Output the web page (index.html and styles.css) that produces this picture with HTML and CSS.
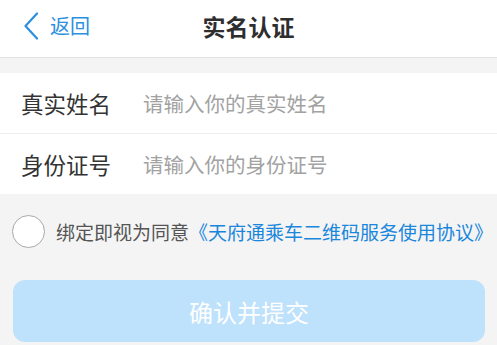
FILE: index.html
```html
<!DOCTYPE html>
<html lang="zh">
<head>
<meta charset="utf-8">
<link rel="stylesheet" href="styles.css">
</head>
<body>
<div class="page">
  <header class="nav">
    <div class="back">
      <svg class="chev" width="16" height="28" viewBox="0 0 16 28"><path d="M14 1.5 L2.5 14 L14 26.5" fill="none" stroke="#2b8fe2" stroke-width="2.2" stroke-linecap="round" stroke-linejoin="round"/></svg>
      <span class="back-text">返回</span>
    </div>
    <div class="title">实名认证</div>
  </header>
  <section class="form">
    <div class="row">
      <span class="label">真实姓名</span>
      <span class="ph">请输入你的真实姓名</span>
    </div>
    <div class="row">
      <span class="label">身份证号</span>
      <span class="ph">请输入你的身份证号</span>
    </div>
  </section>
  <div class="agree">
    <span class="circle"></span>
    <span class="agree-text">绑定即视为同意<span class="link">《天府通乘车二维码服务使用协议》</span></span>
  </div>
  <div class="btn-wrap">
    <div class="btn">确认并提交</div>
  </div>
</div>
</body>
</html>
```

FILE: styles.css
```css
html, body {
  margin: 0;
  padding: 0;
  background: #f4f4f4;
  font-family: "Noto Sans CJK SC", "Noto Sans", sans-serif;
}
.page {
  width: 497px;
  height: 345px;
  overflow: hidden;
  background: #f4f4f4;
}
.nav {
  height: 57px;
  background: #fff;
  border-bottom: 1px solid #e2e2e2;
  position: relative;
  display: flex;
  align-items: center;
  justify-content: center;
}
.back {
  position: absolute;
  left: 23px;
  top: 0;
  height: 52px;
  display: flex;
  align-items: center;
  gap: 11px;
}
.chev { display: block; }
.back-text {
  color: #2b8fe2;
  font-size: 20px;
  line-height: 1;
}
.title {
  font-size: 23px;
  font-weight: bold;
  color: #2e2e2e;
  margin-top: -5px;
}
.form {
  margin-top: 15px;
  background: #fff;
}
.row {
  height: 60px;
  display: flex;
  align-items: center;
  padding-left: 21px;
}
.row + .row {
  border-top: 1px solid #eeeeee;
}
.label {
  width: 122px;
  font-size: 22.5px;
  color: #333;
  line-height: 1;
}
.ph {
  font-size: 20.5px;
  color: #a2a2a2;
  line-height: 1;
}
.agree {
  height: 74px;
  display: flex;
  align-items: center;
  padding-left: 12px;
}
.circle {
  width: 31px;
  height: 31px;
  border: 1.3px solid #a8a8a8;
  border-radius: 50%;
  background: #fff;
  margin-right: 11px;
  flex: none;
}
.agree-text {
  font-size: 19px;
  color: #555;
  white-space: nowrap;
  line-height: 1;
}
.link { color: #1a86dc; }
.btn-wrap {
  padding: 12px 12px 0 13px;
}
.btn {
  height: 62px;
  border-radius: 12px;
  background: #bee1fc;
  color: #fff;
  font-size: 24px;
  display: flex;
  align-items: center;
  justify-content: center;
}
```
